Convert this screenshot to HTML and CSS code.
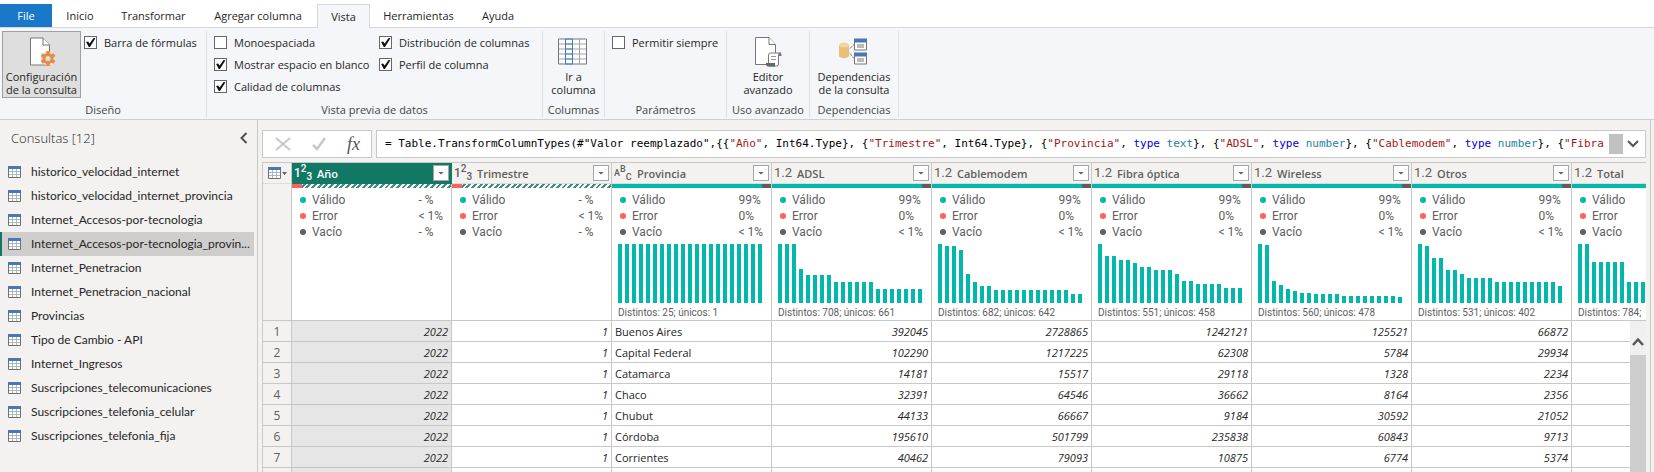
FILE: index.html
```html
<!DOCTYPE html>
<html lang="es">
<head>
<meta charset="utf-8">
<title>Editor de Power Query</title>
<link rel="stylesheet" href="styles.css">
</head>
<body>
<svg class="defs" aria-hidden="true">
  <symbol id="table" viewBox="0 0 13 12">
    <path fill="#fff" d="M0 0h13v12H0z"/>
    <path fill="none" stroke="#a9b9cb" d="M4.5 3v8M8.500 3v8M1 5.500h11M1 8.500h11"/>
    <path fill="none" stroke="#6e6e6e" d="M.5 2v9.500h12V2"/>
    <path fill="#4a78b0" d="M0 0h13v3H0z"/>
  </symbol>
</svg>

<nav class="tabs">
  <button class="tab file">File</button>
  <button class="tab inicio">Inicio</button>
  <button class="tab transformar">Transformar</button>
  <button class="tab agregar">Agregar columna</button>
  <button class="tab active">Vista</button>
  <button class="tab herramientas">Herramientas</button>
  <button class="tab ayuda">Ayuda</button>
</nav>

<section class="ribbon">
  <div class="group g-layout">
    <div class="tools">
      <button class="tool pressed">
        <svg width="28" height="30" viewBox="0 0 28 30"><path d="M2.500 1.500H15l6.500 7v20h-19z" fill="#fff" stroke="#777"/><path d="M15 1.500v7h6.500" fill="#fff" stroke="#777"/><circle cx="20" cy="22" r="7" fill="#dedede"/><path d="M20 14.500v3M20 26.500v3M13.500 18.200l2.600 1.500M23.900 24.300l2.600 1.500M13.500 25.800l2.600-1.500M23.900 19.700l2.600-1.500" stroke="#e98a3c" stroke-width="3.400"/><circle cx="20" cy="22" r="4" fill="#dedede" stroke="#e98a3c" stroke-width="2.800"/></svg>
        <span>Configuración<br>de la consulta</span>
      </button>
      <div class="checks"><label><input type="checkbox" checked>Barra de fórmulas</label></div>
    </div>
    <h2>Diseño</h2>
  </div>
  <div class="group g-preview">
    <div class="tools">
      <div class="checks first">
        <label><input type="checkbox">Monoespaciada</label>
        <label><input type="checkbox" checked>Mostrar espacio en blanco</label>
        <label><input type="checkbox" checked>Calidad de columnas</label>
      </div>
      <div class="checks">
        <label><input type="checkbox" checked>Distribución de columnas</label>
        <label><input type="checkbox" checked>Perfil de columna</label>
      </div>
    </div>
    <h2>Vista previa de datos</h2>
  </div>
  <div class="group g-columns">
    <div class="tools">
      <button class="tool">
        <svg width="30" height="30" viewBox="0 0 30 30"><path d="M.5 2.500h28v25H.5z" fill="#fff"/><path d="M1 7.500h27M1 12.500h27M1 17.500h27M1 22.500h27M21.500 3v24" stroke="#a3a3a3"/><path d="M.5 2.500h28v25H.5z" fill="none" stroke="#777"/><path d="M7.500 2.500h7v25h-7zM7 7.500h8M7 12.500h8M7 17.500h8M7 22.500h8" fill="none" stroke="#3d80bd"/></svg>
        <span>Ir a<br>columna</span>
      </button>
    </div>
    <h2>Columnas</h2>
  </div>
  <div class="group g-params">
    <div class="tools"><div class="checks"><label><input type="checkbox">Permitir siempre</label></div></div>
    <h2>Parámetros</h2>
  </div>
  <div class="group g-advanced">
    <div class="tools">
      <button class="tool">
        <svg width="28" height="31" viewBox="0 0 28 31"><path d="M1.500 1.500H15l6.500 7v20h-20z" fill="#fff" stroke="#777"/><path d="M15 1.500v7h6.500" fill="#fff" stroke="#777"/><path d="M14.500 27V19q0-2 2-2h10q-2 0-2 3v8q0 2-2 2h-8z" fill="#fff" stroke="#777"/><path d="M24.500 20v-1.500q0-2 1.500-2t1.500 3.500z" fill="#777"/><path d="M17 20.500h5M17 23.500h5" stroke="#999"/><path d="M12 27h9v3.500h-7q-2 0-2-3.500z" fill="#666"/></svg>
        <span>Editor<br>avanzado</span>
      </button>
    </div>
    <h2>Uso avanzado</h2>
  </div>
  <div class="group g-deps">
    <div class="tools">
      <button class="tool">
        <svg width="30" height="30" viewBox="0 0 30 30"><path d="M0 9v11q5 3.500 10 0V9z" fill="#e9bf78"/><ellipse cx="5" cy="8.500" rx="5" ry="2.500" fill="#f1d5a5"/><path d="M11 12l4-4M11 17l4 5" stroke="#777" stroke-dasharray="3 1" fill="none"/><path d="M15.500 3.500h12v10h-12zM15.500 17.500h12v10h-12z" fill="#fff" stroke="#777"/><path d="M15 2h13v4H15zM15 16h13v4H15z" fill="#4a78b0"/><path d="M18 8.500h7M18 10.500h7M18 22.500h7M18 24.500h7" stroke="#777"/></svg>
        <span>Dependencias<br>de la consulta</span>
      </button>
    </div>
    <h2>Dependencias</h2>
  </div>
</section>

<main class="workspace">
  <aside class="queries">
    <header><h1>Consultas [12]</h1><button class="collapse" aria-label="Contraer"><svg width="8" height="12" viewBox="0 0 8 12"><path d="M6.500 1L1.500 6l5 5" fill="none" stroke="#505050" stroke-width="2"/></svg></button></header>
    <ul>
      <li><svg><use href="#table"/></svg><span>historico_velocidad_internet</span></li>
      <li><svg><use href="#table"/></svg><span>historico_velocidad_internet_provincia</span></li>
      <li><svg><use href="#table"/></svg><span>Internet_Accesos-por-tecnologia</span></li>
      <li class="selected"><svg><use href="#table"/></svg><span>Internet_Accesos-por-tecnologia_provin...</span></li>
      <li><svg><use href="#table"/></svg><span>Internet_Penetracion</span></li>
      <li><svg><use href="#table"/></svg><span>Internet_Penetracion_nacional</span></li>
      <li><svg><use href="#table"/></svg><span>Provincias</span></li>
      <li><svg><use href="#table"/></svg><span>Tipo de Cambio - API</span></li>
      <li><svg><use href="#table"/></svg><span>Internet_Ingresos</span></li>
      <li><svg><use href="#table"/></svg><span>Suscripciones_telecomunicaciones</span></li>
      <li><svg><use href="#table"/></svg><span>Suscripciones_telefonia_celular</span></li>
      <li><svg><use href="#table"/></svg><span>Suscripciones_telefonia_fija</span></li>
    </ul>
  </aside>

  <section class="editor">
    <div class="formula-bar">
      <div class="formula-actions">
        <button aria-label="Cancelar"><svg width="16" height="14" viewBox="0 0 16 14"><path d="M1 1l14 12M15 1L1 13" stroke="#c8c8c8" stroke-width="2"/></svg></button>
        <button aria-label="Aceptar"><svg width="14" height="14" viewBox="0 0 14 14"><path d="M1 8l4 4 8-11" fill="none" stroke="#c8c8c8" stroke-width="2.600"/></svg></button>
        <button class="fx" aria-label="Función">fx</button>
      </div>
      <div class="formula">
        <code>= Table.TransformColumnTypes(#"Valor reemplazado",{{<i>"Año"</i>, Int64.Type}, {<i>"Trimestre"</i>, Int64.Type}, {<i>"Provincia"</i>, <b>type</b> <u>text</u>}, {<i>"ADSL"</i>, <b>type</b> <u>number</u>}, {<i>"Cablemodem"</i>, <b>type</b> <u>number</u>}, {<i>"Fibra</i></code>
        <span class="formula-thumb"></span>
        <button aria-label="Expandir"><svg width="12" height="8" viewBox="0 0 12 8"><path d="M1 1l5 5 5-5" fill="none" stroke="#555" stroke-width="2"/></svg></button>
      </div>
    </div>

    <div class="grid">
      <table>
        <colgroup><col class="index"><col span="9"></colgroup>
        <thead>
          <tr class="names">
            <th><button class="corner" aria-label="Tabla"><svg class="t-icon"><use href="#table"/></svg><svg width="5" height="3"><path d="M0 0h5L2.500 3z" fill="#605e5c"/></svg></button></th>
            <th class="active"><div><em class="type"><small>1</small><sup>2</sup><sub>3</sub></em><span>Año</span><button aria-label="Filtrar Año"></button></div></th>
            <th><div><em class="type"><small>1</small><sup>2</sup><sub>3</sub></em><span>Trimestre</span><button aria-label="Filtrar Trimestre"></button></div></th>
            <th><div><em class="type abc"><small>A</small><sup>B</sup><sub>C</sub></em><span>Provincia</span><button aria-label="Filtrar Provincia"></button></div></th>
            <th><div><em>1.2</em><span>ADSL</span><button aria-label="Filtrar ADSL"></button></div></th>
            <th><div><em>1.2</em><span>Cablemodem</span><button aria-label="Filtrar Cablemodem"></button></div></th>
            <th><div><em>1.2</em><span>Fibra óptica</span><button aria-label="Filtrar Fibra óptica"></button></div></th>
            <th><div><em>1.2</em><span>Wireless</span><button aria-label="Filtrar Wireless"></button></div></th>
            <th><div><em>1.2</em><span>Otros</span><button aria-label="Filtrar Otros"></button></div></th>
            <th><div><em>1.2</em><span>Total</span><button aria-label="Filtrar Total"></button></div></th>
          </tr>
          <tr class="profile">
            <td></td>
            <td><div class="quality partial"></div><dl><dt>Válido</dt><dd>- %</dd><dt>Error</dt><dd>&lt; 1%</dd><dt>Vacío</dt><dd>- %</dd></dl></td>
            <td><div class="quality partial"></div><dl><dt>Válido</dt><dd>- %</dd><dt>Error</dt><dd>&lt; 1%</dd><dt>Vacío</dt><dd>- %</dd></dl></td>
            <td><div class="quality"></div><dl><dt>Válido</dt><dd>99%</dd><dt>Error</dt><dd>0%</dd><dt>Vacío</dt><dd>&lt; 1%</dd></dl>
              <svg class="bars" viewBox="0 0 144 59"><path d="M2 59V0M9 59V0M16 59V0M23 59V0M30 59V0M37 59V0M44 59V0M51 59V0M58 59V0M65 59V0M72 59V0M79 59V0M86 59V0M93 59V0M100 59V0M107 59V0M114 59V0M121 59V0M128 59V0M135 59V0M142 59V0"/></svg><p>Distintos: 25; únicos: 1</p></td>
            <td><div class="quality"></div><dl><dt>Válido</dt><dd>99%</dd><dt>Error</dt><dd>0%</dd><dt>Vacío</dt><dd>&lt; 1%</dd></dl>
              <svg class="bars" viewBox="0 0 144 59"><path d="M2 59V0M9 59V0M16 59V0M23 59V25M30 59V31M37 59V31M44 59V31M51 59V31M58 59V38M65 59V38M72 59V38M79 59V38M86 59V38M93 59V38M100 59V45M107 59V45M114 59V45M121 59V45M128 59V45M135 59V45M142 59V45"/></svg><p>Distintos: 708; únicos: 661</p></td>
            <td><div class="quality"></div><dl><dt>Válido</dt><dd>99%</dd><dt>Error</dt><dd>0%</dd><dt>Vacío</dt><dd>&lt; 1%</dd></dl>
              <svg class="bars" viewBox="0 0 144 59"><path d="M2 59V0M9 59V2M16 59V2M23 59V6M30 59V30M37 59V38M44 59V42M51 59V42M58 59V46M65 59V46M72 59V46M79 59V46M86 59V46M93 59V46M100 59V46M107 59V46M114 59V46M121 59V46M128 59V46M135 59V50M142 59V50"/></svg><p>Distintos: 682; únicos: 642</p></td>
            <td><div class="quality"></div><dl><dt>Válido</dt><dd>99%</dd><dt>Error</dt><dd>0%</dd><dt>Vacío</dt><dd>&lt; 1%</dd></dl>
              <svg class="bars" viewBox="0 0 144 59"><path d="M2 59V0M9 59V12M16 59V12M23 59V16M30 59V16M37 59V19M44 59V23M51 59V23M58 59V26M65 59V26M72 59V26M79 59V30M86 59V37M93 59V37M100 59V40M107 59V40M114 59V40M121 59V40M128 59V44M135 59V44M142 59V44"/></svg><p>Distintos: 551; únicos: 458</p></td>
            <td><div class="quality"></div><dl><dt>Válido</dt><dd>99%</dd><dt>Error</dt><dd>0%</dd><dt>Vacío</dt><dd>&lt; 1%</dd></dl>
              <svg class="bars" viewBox="0 0 144 59"><path d="M2 59V0M9 59V1M16 59V37M23 59V41M30 59V45M37 59V47M44 59V49M51 59V49M58 59V50M65 59V50M72 59V50M79 59V50M86 59V52M93 59V52M100 59V52M107 59V52M114 59V52M121 59V52M128 59V52M135 59V52M142 59V53"/></svg><p>Distintos: 560; únicos: 478</p></td>
            <td><div class="quality"></div><dl><dt>Válido</dt><dd>99%</dd><dt>Error</dt><dd>0%</dd><dt>Vacío</dt><dd>&lt; 1%</dd></dl>
              <svg class="bars" viewBox="0 0 144 59"><path d="M2 59V0M9 59V2M16 59V14M23 59V14M30 59V26M37 59V26M44 59V30M51 59V34M58 59V34M65 59V34M72 59V34M79 59V38M86 59V38M93 59V38M100 59V38M107 59V38M114 59V38M121 59V38M128 59V38M135 59V38M142 59V42"/></svg><p>Distintos: 531; únicos: 402</p></td>
            <td><div class="quality"></div><dl><dt>Válido</dt><dd></dd><dt>Error</dt><dd></dd><dt>Vacío</dt><dd></dd></dl>
              <svg class="bars" viewBox="0 0 144 59"><path d="M2 59V0M9 59V0M16 59V18M23 59V18M30 59V18M37 59V18M44 59V18M51 59V38M58 59V38M65 59V38"/></svg><p>Distintos: 784;</p></td>
          </tr>
        </thead>
        <tbody>
          <tr><th>1</th><td>2022</td><td>1</td><td>Buenos Aires</td><td>392045</td><td>2728865</td><td>1242121</td><td>125521</td><td>66872</td><td></td></tr>
          <tr><th>2</th><td>2022</td><td>1</td><td>Capital Federal</td><td>102290</td><td>1217225</td><td>62308</td><td>5784</td><td>29934</td><td></td></tr>
          <tr><th>3</th><td>2022</td><td>1</td><td>Catamarca</td><td>14181</td><td>15517</td><td>29118</td><td>1328</td><td>2234</td><td></td></tr>
          <tr><th>4</th><td>2022</td><td>1</td><td>Chaco</td><td>32391</td><td>64546</td><td>36662</td><td>8164</td><td>2356</td><td></td></tr>
          <tr><th>5</th><td>2022</td><td>1</td><td>Chubut</td><td>44133</td><td>66667</td><td>9184</td><td>30592</td><td>21052</td><td></td></tr>
          <tr><th>6</th><td>2022</td><td>1</td><td>Córdoba</td><td>195610</td><td>501799</td><td>235838</td><td>60843</td><td>9713</td><td></td></tr>
          <tr><th>7</th><td>2022</td><td>1</td><td>Corrientes</td><td>40462</td><td>79093</td><td>10875</td><td>6774</td><td>5374</td><td></td></tr>
          <tr><th></th><td></td><td></td><td></td><td></td><td></td><td></td><td></td><td></td><td></td></tr>
        </tbody>
      </table>
      <div class="scrollbar"><button aria-label="Subir"><svg width="12" height="10" viewBox="0 0 12 10"><path d="M1 8l5-5.500L11 8" fill="none" stroke="#555" stroke-width="2.500"/></svg></button><span></span></div>
    </div>
  </section>
</main>
</body>
</html>
```
FILE: styles.css
```css
* { box-sizing: border-box; }
body {
  margin: 0;
  height: 100vh;
  display: flex;
  flex-direction: column;
  overflow: hidden;
  background: #fff;
  color: #262626;
  font: 11px/13px "Open Sans", "Noto Sans", sans-serif;
}
button { margin: 0; padding: 0; border: 0; background: none; color: inherit; font: inherit; }
h1, h2, ul, dl, dd, p { margin: 0; padding: 0; font: inherit; }
svg { display: block; flex: none; }
.defs { position: absolute; width: 0; height: 0; }

/* Tabs */
.tabs { display: flex; padding-top: 4px; border-bottom: 1px solid #d6d8da; }
.tab { height: 23px; text-align: center; }
.file { width: 52px; background: #1a78c8; color: #fff; }
.inicio { width: 56px; }
.transformar { width: 91px; }
.agregar { width: 118px; }
.active.tab { width: 53px; height: 24px; margin-bottom: -1px; border: 1px solid #d6d8da; border-bottom: 0; background: #f4f6f9; }
.herramientas { width: 97px; }
.ayuda { width: 62px; }

/* Ribbon */
.ribbon { flex: none; display: flex; height: 92px; padding: 3px 0 1px; background: #f4f6f9; border-bottom: 1px solid #cfcfcf; }
.group { display: flex; flex-direction: column; border-right: 1px solid #dfe1e4; }
.group h2 { padding-bottom: 2px; color: #444; text-align: center; }
.tools { flex: 1; display: flex; justify-content: center; align-items: flex-start; }
.g-layout { width: 207px; }
.g-preview { width: 336px; }
.g-columns { width: 62px; }
.g-params { width: 122px; }
.g-advanced { width: 83px; }
.g-deps { width: 89px; }
.g-layout .tools, .g-preview .tools, .g-params .tools { justify-content: flex-start; }
.g-layout .tools { padding-left: 2px; gap: 3px; }
.g-preview .tools, .g-params .tools { padding-left: 7px; }
.first { width: 165px; }
.tool { display: flex; flex-direction: column; align-items: center; gap: 3px; padding: 5px 0 0; white-space: nowrap; }
.tool svg { height: 31px; }
.pressed { width: 79px; height: 67px; padding-top: 4px; background: #dedede; border: 1px solid #a0a0a0; }
.checks { display: flex; flex-direction: column; gap: 9px; padding-top: 5px; white-space: nowrap; }
.checks label { display: flex; align-items: center; gap: 7px; }
.checks input { appearance: none; flex: none; width: 13px; height: 13px; margin: 0; border: 1px solid #666; background: #fff; }
.checks input:checked::before { content: ""; display: block; width: 11px; height: 11px; background: #111; clip-path: polygon(10% 45%, 28% 42%, 42% 60%, 78% 10%, 95% 12%, 45% 92%, 34% 92%); }

/* Queries pane */
.workspace { flex: 1; min-height: 0; display: flex; background: #f3f2f1; }
.queries { flex: none; width: 258px; border-right: 1px solid #c8c8c8; }
.queries header { display: flex; align-items: center; justify-content: space-between; height: 40px; padding: 0 9px 4px 11px; }
.queries h1 { font-size: 13px; line-height: 18px; font-weight: 300; }
.queries ul { list-style: none; margin-right: 3px; }
.queries li { display: flex; align-items: center; gap: 10px; height: 24px; padding-left: 8px; font: 12px/16px Lato, "Open Sans", sans-serif; white-space: nowrap; }
.queries li svg { width: 13px; height: 12px; }
.selected { background: #d0cecd; box-shadow: inset 2px 0 #117865; }

/* Formula bar */
.editor { flex: 1; min-width: 0; display: flex; flex-direction: column; gap: 4px; margin-right: 3px; padding: 10px 4px 0 4px; border-right: 1px solid #c8c8c8; }
.formula-bar { display: flex; gap: 4px; height: 28px; }
.formula-actions, .formula { display: flex; align-items: center; border: 1px solid #c8c8c8; background: #fff; }
.formula-actions { flex: none; width: 110px; justify-content: space-between; padding: 0 11px 0 12px; }
.fx { color: #555; font: italic 18px/20px "Liberation Serif", serif; }
.formula { flex: 1; min-width: 0; padding: 0 6px 0 8px; }
.formula code { flex: 1; min-width: 0; overflow: hidden; white-space: pre; color: #000; font: 11px/18px "DejaVu Sans Mono", monospace; }
.formula i { color: #a31515; font-style: normal; }
.formula b { color: #0000e0; font-weight: 400; }
.formula u { color: #267f99; text-decoration: none; }
.formula-thumb { width: 14px; height: 20px; margin-right: 4px; background: #c1c1c1; }

/* Data grid */
.grid { position: relative; flex: 1; min-height: 0; overflow: hidden; border-top: 1px solid #c8c8c8; border-left: 1px solid #c8c8c8; }
table { width: 1469px; table-layout: fixed; border-collapse: separate; border-spacing: 0; background: #fff; }
col { width: 160px; }
.index { width: 29px; }
td, th { padding: 0; border-right: 1px solid #c8c8c8; border-bottom: 1px solid #c8c8c8; font-weight: 400; }
.names th { height: 21px; background: #f3f2f1; border-bottom-color: #dcdcdc; color: #605e5c; }
.names th.active { background: #117865; border-color: #117865; color: #fff; }
.names div { display: flex; align-items: center; padding: 0 2px; }
.names span { flex: 1; padding-left: 5px; text-align: left; font-weight: 600; }
.names em { flex: none; width: 18px; font: 13px/18px Roboto, sans-serif; text-align: left; white-space: nowrap; }
.names .type { display: flex; align-items: center; height: 18px; font: 500 10px/10px Roboto, sans-serif; }
.type small { font-size: 12px; }
.type sup { align-self: flex-start; height: 10px; font-size: 10px; }
.type sub { align-self: flex-end; height: 10px; font-size: 10px; }
.abc small, .abc sup, .abc sub { font-size: 9px; }
.names div button { width: 16px; height: 16px; border: 1px solid #a6a6a6; background: #fff; }
.names div button::before { content: ""; display: block; width: 6px; height: 3px; margin: 0 auto; background: #605e5c; clip-path: polygon(0 0, 100% 0, 50% 100%); }
.corner { display: flex; align-items: center; gap: 1px; padding-left: 5px; }
.t-icon { width: 13px; height: 12px; }
.profile td { height: 137px; vertical-align: top; color: #605e5c; }
.profile td:first-child, tbody th { background: #f3f2f1; }
.quality { height: 4px; background: linear-gradient(90deg, #01b8aa 150px, #605e5c 150px); }
.partial { background: linear-gradient(90deg, #fd625e 10px, transparent 10px), repeating-linear-gradient(135deg, #3d9080 0 2px, #fff 2px 4px); }
.profile dl { display: grid; grid-template-columns: 1fr auto; padding: 4px 8px 4px; font: 12px/16px Roboto, sans-serif; }
.profile dt { display: flex; align-items: center; gap: 6px; }
.profile dt::before { content: ""; width: 6px; height: 6px; border-radius: 50%; background: #01b8aa; }
.profile dt:nth-of-type(2)::before { background: #fd625e; }
.profile dt:nth-of-type(3)::before { background: #605e5c; }
.bars { width: 144px; height: 59px; margin-left: 6px; }
.bars path { stroke: #01b8aa; stroke-width: 4; }
.profile p { padding: 3px 0 0 6px; font: 10px/14px Roboto, sans-serif; white-space: nowrap; }
tbody td, tbody th { height: 21px; }
tbody th { color: #605e5c; font-size: 12px; }
tbody td { padding: 0 3px; text-align: right; font-style: italic; }
tbody td:nth-child(2) { background: #e6e6e6; }
tbody td:nth-child(4) { text-align: left; font-style: normal; }
.scrollbar { position: absolute; top: 158px; right: 0; bottom: 0; width: 16px; display: flex; flex-direction: column; background: #f0f0f0; }
.scrollbar button { display: flex; justify-content: center; height: 34px; padding-top: 16px; }
.scrollbar span { flex: 1; background: #cdcdcd; }
```
